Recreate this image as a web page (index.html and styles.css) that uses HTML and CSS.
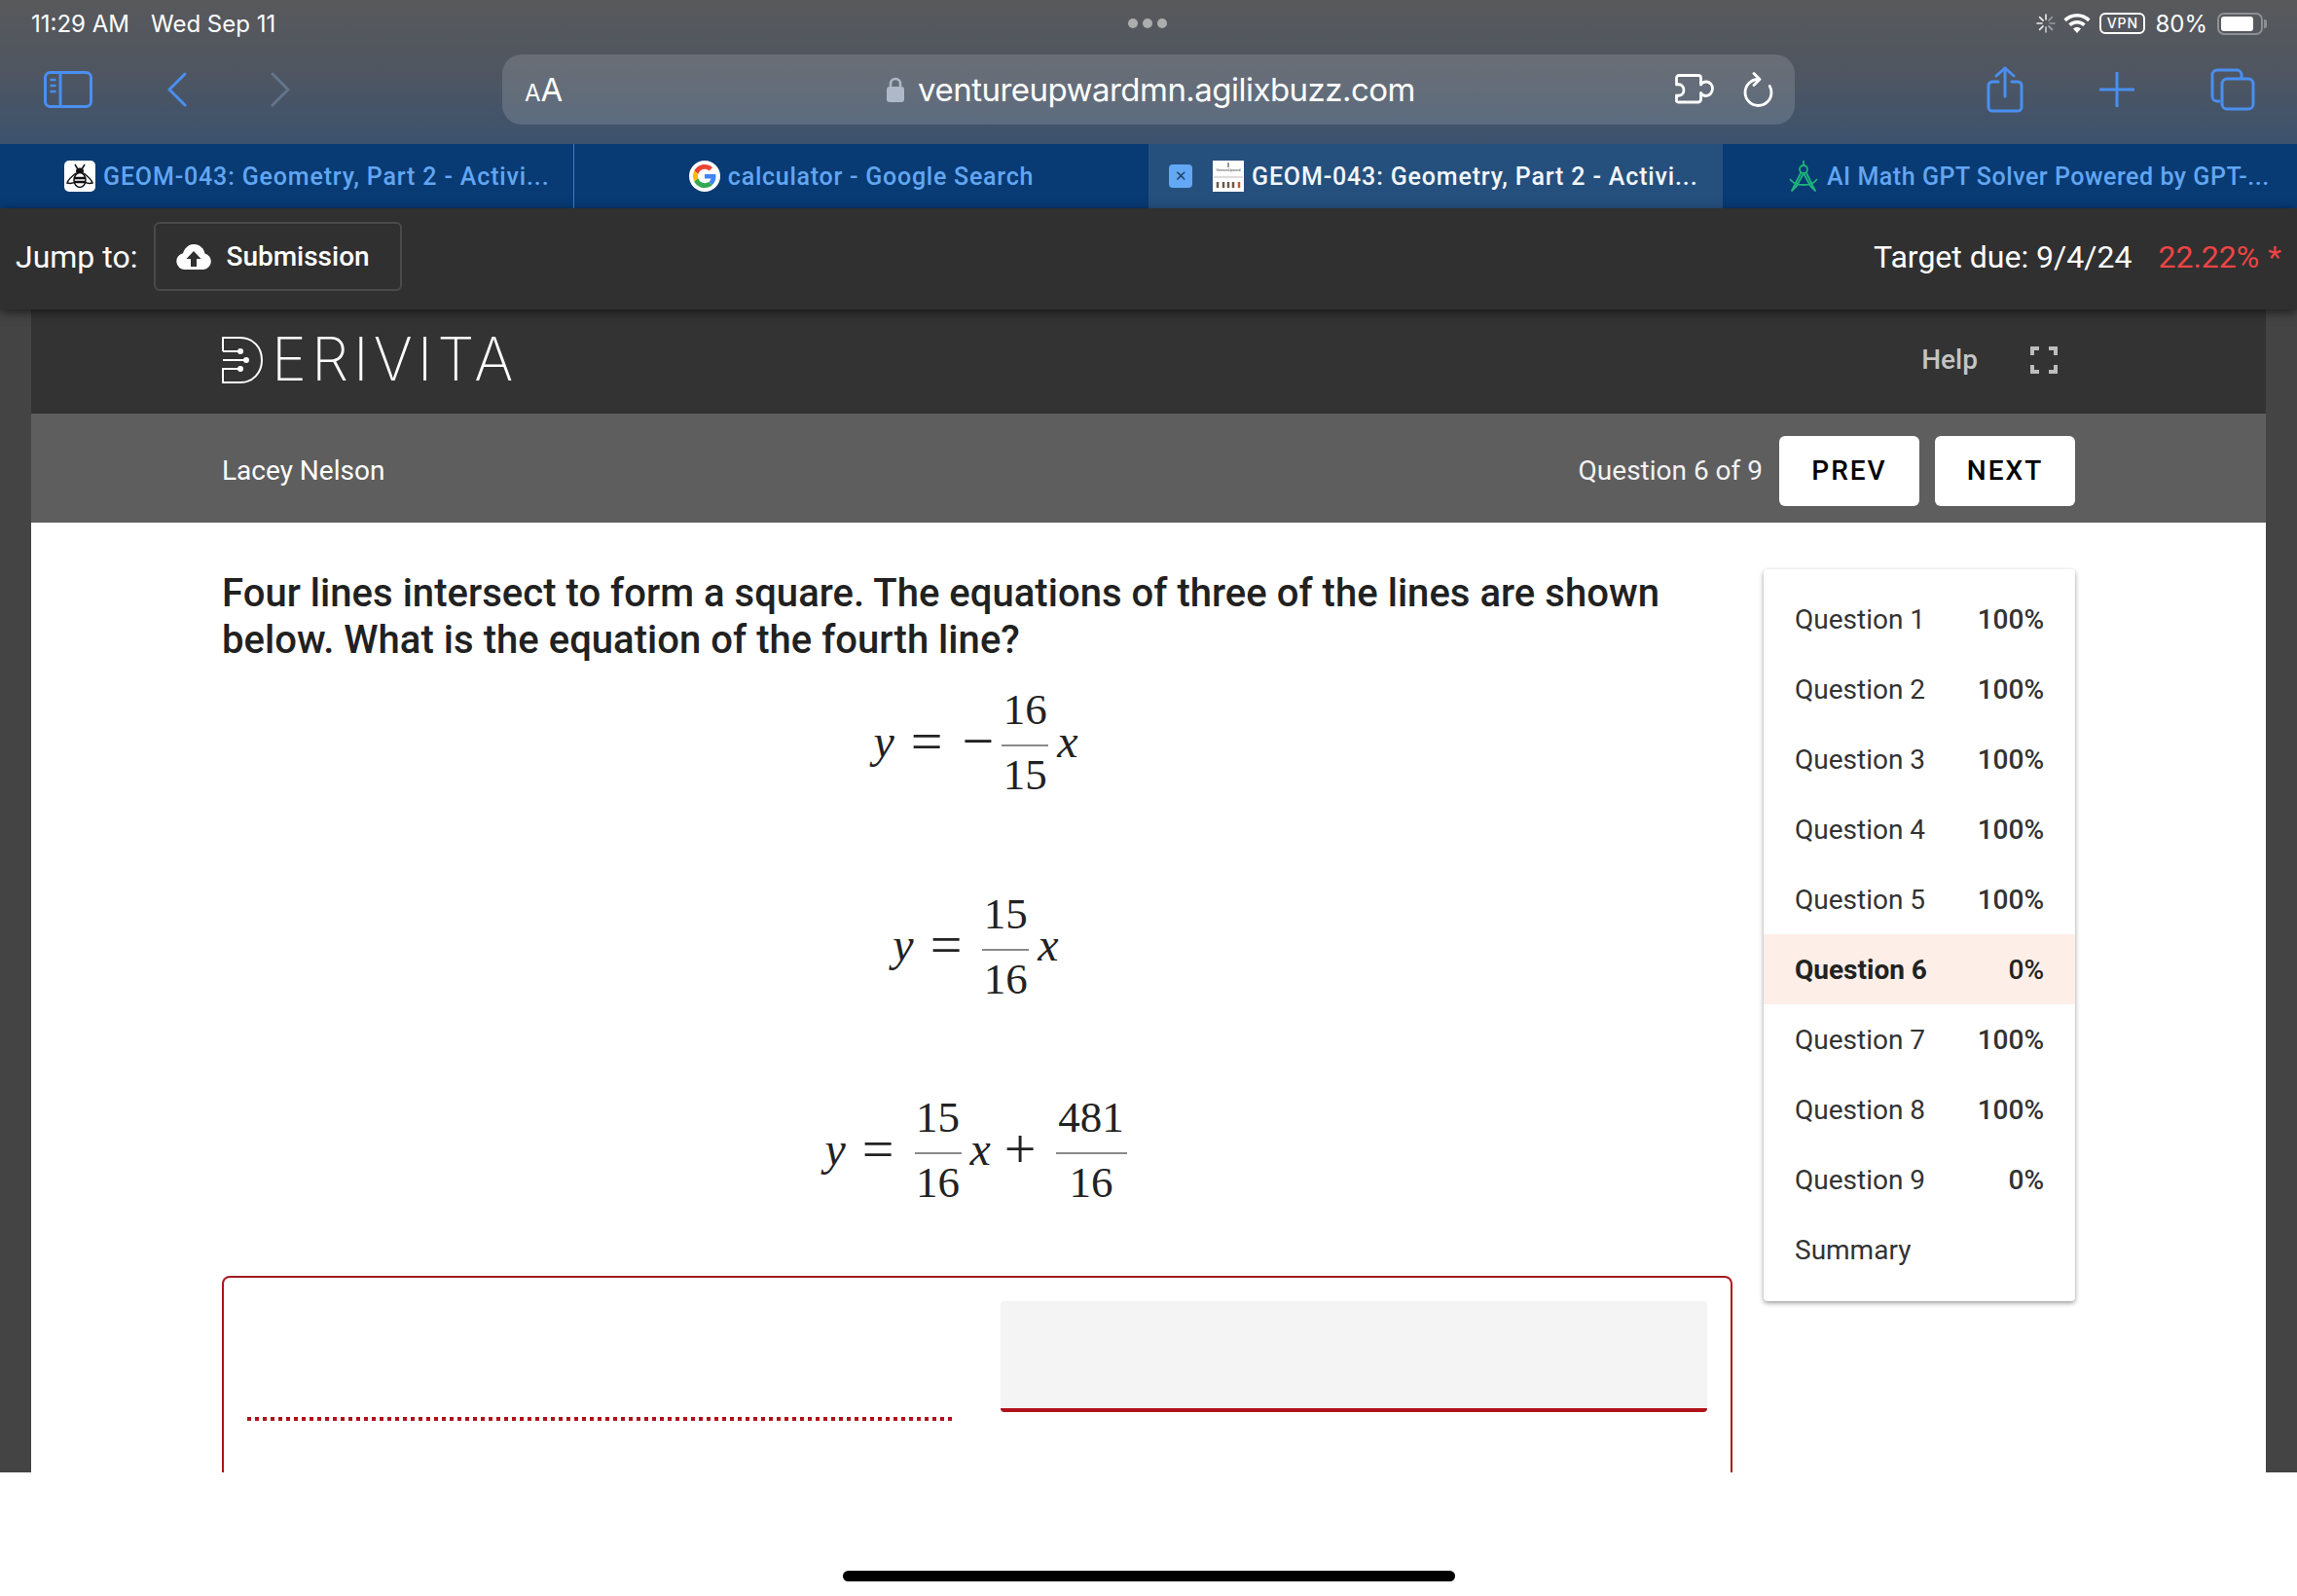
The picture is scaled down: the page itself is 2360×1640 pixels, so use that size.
FILE: index.html
```html
<!DOCTYPE html>
<html lang="en">
<head>
    <meta charset="UTF-8">
    <title>GEOM-043: Geometry, Part 2 - Activity</title>
    <link rel="stylesheet" href="styles.css">
</head>
<body>
    <div class="chrome">
        <div class="status-bar">
            <div class="status-time"><span>11:29 AM</span><span>Wed Sep 11</span></div>
            <div class="status-dots"><i></i><i></i><i></i></div>
            <div class="status-right">
                <svg class="ic-spin" viewBox="0 0 20 20" fill="none" stroke="#fff" stroke-width="1.6" stroke-linecap="round">
                    <path d="M10 1v5" opacity=".9"/><path d="M16.4 3.6l-3.5 3.5" opacity=".4"/><path d="M19 10h-5" opacity=".4"/><path d="M16.4 16.4l-3.5-3.5" opacity=".5"/><path d="M10 19v-5" opacity=".7"/><path d="M3.6 16.4l3.5-3.5" opacity=".9"/><path d="M1 10h5" opacity=".9"/><path d="M3.6 3.6l3.5 3.5" opacity=".9"/>
                </svg>
                <svg class="ic-wifi" viewBox="0 0 28 20" fill="#fff">
                    <path d="M14 0C8.6 0 3.8 2.1.4 5.6l2.5 2.6C5.8 5.4 9.7 3.6 14 3.6s8.200 1.800 11.100 4.600l2.500-2.600C24.200 2.100 19.400 0 14 0z"/>
                    <path d="M14 7C10.600 7 7.600 8.300 5.300 10.500l2.500 2.600C9.400 11.600 11.600 10.600 14 10.600s4.600 1 6.200 2.500l2.500-2.600C20.400 8.300 17.400 7 14 7z"/>
                    <path d="M14 14c-1.600 0-3 .6-4 1.600l4 4.400 4-4.400c-1-1-2.400-1.600-4-1.600z"/>
                </svg>
                <span class="vpn">VPN</span>
                <span class="batt-pct">80%</span>
                <span class="battery"><span class="battery-fill"></span></span>
            </div>
        </div>
        <div class="toolbar">
            <svg class="ic-sidebar" viewBox="0 0 50 38" fill="none" stroke="#4a8ff0" stroke-width="3">
                <rect x="1.500" y="1.500" width="47" height="35" rx="5"/><path d="M17 2v34"/>
                <path d="M6.500 9h6M6.500 15h6M6.500 21h6" stroke-width="2.500"/>
            </svg>
            <svg class="ic-back" viewBox="0 0 20 36" fill="none" stroke="#4a8ff0" stroke-width="3" stroke-linecap="round" stroke-linejoin="round"><path d="M18 2L2 18l16 16"/></svg>
            <svg class="ic-forward" viewBox="0 0 20 36" fill="none" stroke="#63758a" stroke-width="3" stroke-linecap="round" stroke-linejoin="round"><path d="M2 2l16 16L2 34"/></svg>
            <div class="address">
                <span class="aa"><small>A</small>A</span>
                <div class="url">
                    <svg class="ic-lock" viewBox="0 0 18 26"><path d="M4 11V7a5 5 0 0 1 10 0v4" fill="none" stroke="#aeb8c8" stroke-width="2.500"/><rect y="10" width="18" height="16" rx="3" fill="#aeb8c8"/></svg>
                    <span>ventureupwardmn.agilixbuzz.com</span>
                </div>
                <svg class="ic-puzzle" viewBox="0 0 40 32" fill="none" stroke="#fff" stroke-width="2.800" stroke-linejoin="round">
                    <path d="M4 1.500h20a2.500 2.500 0 0 1 2.500 2.500v7c1-2 3-3 5.500-3 3.500 0 6.500 3 6.500 7s-3 7.500-6.500 7.500c-2.500 0-4.500-1-5.500-3v7a3 3 0 0 1-2.500 2.500H4A2.500 2.500 0 0 1 1.500 28v-6c4.500 1 7.500-1.500 7.500-5.500S6 10 1.500 11V4A2.500 2.500 0 0 1 4 1.500z"/>
                </svg>
                <svg class="ic-reload" viewBox="0 0 31 36" fill="none" stroke="#fff" stroke-width="2.800" stroke-linecap="round" stroke-linejoin="round">
                    <path d="M15.500 7.500A13.500 13.500 0 1 0 29 21c0-2.600-.6-4.700-1.800-6.600"/><path d="M11 1.500l6 6-6 6"/>
                </svg>
            </div>
            <svg class="ic-share" viewBox="0 0 38 48" fill="none" stroke="#4a8ff0" stroke-width="3" stroke-linecap="round" stroke-linejoin="round">
                <path d="M12 16H6a4 4 0 0 0-4 4v22a4 4 0 0 0 4 4h26a4 4 0 0 0 4-4V20a4 4 0 0 0-4-4h-6"/><path d="M19 31V2"/><path d="M10 10l9-8 9 8"/>
            </svg>
            <svg class="ic-plus" viewBox="0 0 36 36" fill="none" stroke="#4a8ff0" stroke-width="3" stroke-linecap="round"><path d="M18 1v34M1 18h34"/></svg>
            <svg class="ic-tabs" viewBox="0 0 46 44" fill="none" stroke="#4a8ff0" stroke-width="3">
                <path d="M10 34H7a5 5 0 0 1-5-5V7a5 5 0 0 1 5-5h20a5 5 0 0 1 5 5v4"/>
                <rect x="12" y="11" width="32" height="31" rx="5"/>
            </svg>
        </div>
        <div class="tabs">
            <div class="tab tab-first">
                <svg class="favicon" viewBox="0 0 32 32">
                    <rect width="32" height="32" rx="5" fill="#fff"/>
                    <path d="M11 4l3 5M21 4l-3 5" stroke="#111" stroke-width="1.500"/>
                    <ellipse cx="16" cy="11" rx="4" ry="3.500" fill="#111"/>
                    <path d="M12 13C8 16 4 20 3 23c4 1 7 0 9-2M20 13c4 3 8 7 9 10-4 1-7 0-9-2" fill="#fff" stroke="#111" stroke-width="1.500"/>
                    <ellipse cx="16" cy="20" rx="6" ry="7.500" fill="#fff" stroke="#111" stroke-width="1.500"/>
                    <path d="M10.500 18h11M10.500 22h11" stroke="#111" stroke-width="2.500"/>
                </svg>
                <span class="tab-title">GEOM-043: Geometry, Part 2 - Activi...</span>
            </div>
            <div class="tab tab-second">
                <svg class="favicon" viewBox="-8 -8 64 64">
                    <circle cx="24" cy="24" r="32" fill="#fff"/>
                    <path fill="#ea4335" d="M24 9.500c3.540 0 6.710 1.220 9.210 3.600l6.850-6.850C35.900 2.380 30.470 0 24 0 14.620 0 6.510 5.380 2.560 13.220l7.980 6.190C12.430 13.720 17.740 9.500 24 9.500z"/>
                    <path fill="#4285f4" d="M46.980 24.550c0-1.570-.15-3.090-.38-4.550H24v9.020h12.940c-.58 2.960-2.260 5.480-4.780 7.180l7.730 6c4.510-4.180 7.090-10.360 7.090-17.650z"/>
                    <path fill="#fbbc05" d="M10.530 28.590c-.48-1.450-.76-2.990-.76-4.590s.27-3.140.76-4.590l-7.980-6.190C.92 16.460 0 20.120 0 24c0 3.880.92 7.540 2.560 10.780l7.970-6.190z"/>
                    <path fill="#34a853" d="M24 48c6.480 0 11.930-2.130 15.890-5.810l-7.730-6c-2.150 1.450-4.920 2.300-8.160 2.300-6.260 0-11.570-4.220-13.470-9.910l-7.980 6.190C6.510 42.620 14.620 48 24 48z"/>
                </svg>
                <span class="tab-title">calculator - Google Search</span>
            </div>
            <div class="tab tab-active">
                <span class="tab-close">&#x2715;</span>
                <svg class="favicon" viewBox="0 0 32 32">
                    <rect width="32" height="32" fill="#fff"/>
                    <text x="16" y="11" class="favicon-word">VentureUpward</text>
                    <path d="M16 2v5" stroke="#333"/>
                    <path d="M1 17h30" stroke="#bbb"/>
                    <path d="M5 22v6M11 22v6M16 22v6M21 22v6" stroke="#6a5a4a" stroke-width="2.500"/>
                    <path d="M27 22v6" stroke="#c8552f" stroke-width="2.500"/>
                </svg>
                <span class="tab-title">GEOM-043: Geometry, Part 2 - Activi...</span>
            </div>
            <div class="tab tab-last">
                <svg class="favicon" viewBox="0 0 32 32" fill="none" stroke="#1db57c" stroke-width="1.800" stroke-linejoin="round">
                    <circle cx="16" cy="9" r="4"/><path d="M16 0v5M13.500 12L4 31l5-5 7-13M18.500 12L28 31l-5-5-7-13M2 19c3 4 6 6 14 6s11-2 14-6"/>
                </svg>
                <span class="tab-title">AI Math GPT Solver Powered by GPT-...</span>
            </div>
        </div>
    </div>

    <div class="jump-bar">
        <span class="jump-label">Jump to:</span>
        <button class="jump-btn">
            <svg class="ic-upload" viewBox="0 0 36 26">
                <path d="M9 26a8.500 8.500 0 0 1-2-16.800C8.500 4 13 0 18 0c6 0 10.500 4 11.500 9.500A8.400 8.400 0 0 1 28 26z" fill="#fff"/>
                <path d="M18 7l7.500 8H21v8h-6v-8h-4.500z" fill="#303030"/>
            </svg>
            Submission
        </button>
        <div class="jump-right">
            <span>Target due: 9/4/24</span>
            <span class="score">22.22%</span>
            <span class="star">*</span>
        </div>
    </div>

    <div class="page">
        <div class="brand-bar">
            <div class="logo">
                <svg class="logo-d" viewBox="0 0 43 48" fill="none" stroke="#fff" stroke-width="2">
                    <path d="M1 15V1h18c13 0 22 10 22 23s-9 23-22 23H1V32"/>
                    <path d="M1 15h17M1 24h23M1 33h17"/>
                    <circle cx="19" cy="15" r="3" fill="#fff" stroke="none"/><circle cx="25" cy="24" r="3" fill="#fff" stroke="none"/><circle cx="19" cy="33" r="3" fill="#fff" stroke="none"/>
                </svg>
                <span class="logo-text">ERIVITA</span>
            </div>
            <div class="brand-right">
                <span class="help">Help</span>
                <svg class="ic-full" viewBox="0 0 28 28" fill="none" stroke="#bdbdbd" stroke-width="4">
                    <path d="M9 2H2v7M19 2h7v7M9 26H2v-7M19 26h7v-7"/>
                </svg>
            </div>
        </div>
        <div class="user-bar">
            <span>Lacey Nelson</span>
            <div class="user-right">
                <span class="q-count">Question 6 of 9</span>
                <button class="nav-btn">PREV</button>
                <button class="nav-btn">NEXT</button>
            </div>
        </div>
        <div class="content">
            <div class="question">
                <p class="prompt">Four lines intersect to form a square. The equations of three of the lines are shown below. What is the equation of the fourth line?</p>
                <div class="eq">
                    <i class="var">y</i><span class="op eq-sign">=</span><span class="op minus">&minus;</span>
                    <span class="frac"><span class="num">16</span><span class="den">15</span></span>
                    <i class="var after-frac">x</i>
                </div>
                <div class="eq">
                    <i class="var">y</i><span class="op eq-sign">=</span>
                    <span class="frac"><span class="num">15</span><span class="den">16</span></span>
                    <i class="var after-frac">x</i>
                </div>
                <div class="eq">
                    <i class="var">y</i><span class="op eq-sign">=</span>
                    <span class="frac"><span class="num">15</span><span class="den">16</span></span>
                    <i class="var after-frac">x</i><span class="op plus">+</span>
                    <span class="frac frac-wide"><span class="num">481</span><span class="den">16</span></span>
                </div>
                <div class="answer-box">
                    <div class="dotted"></div>
                    <div class="answer-input"></div>
                </div>
            </div>
            <aside class="side-list">
                <div class="side-row"><span>Question 1</span><span class="pct">100%</span></div>
                <div class="side-row"><span>Question 2</span><span class="pct">100%</span></div>
                <div class="side-row"><span>Question 3</span><span class="pct">100%</span></div>
                <div class="side-row"><span>Question 4</span><span class="pct">100%</span></div>
                <div class="side-row"><span>Question 5</span><span class="pct">100%</span></div>
                <div class="side-row current"><span>Question 6</span><span class="pct">0%</span></div>
                <div class="side-row"><span>Question 7</span><span class="pct">100%</span></div>
                <div class="side-row"><span>Question 8</span><span class="pct">100%</span></div>
                <div class="side-row"><span>Question 9</span><span class="pct">0%</span></div>
                <div class="side-row"><span>Summary</span></div>
            </aside>
        </div>
    </div>

    <div class="home-area"><div class="home-bar"></div></div>
</body>
</html>
```

FILE: styles.css
```css
:root {
    --blue: #4a8ff0;
    --tab-text: #62a6f2;
    --red: #b0121a;
}

* {
    box-sizing: border-box;
}

body {
    margin: 0;
    width: 2360px;
    height: 1640px;
    overflow: hidden;
    background: #fff;
    font-family: Roboto, sans-serif;
    display: flex;
    flex-direction: column;
}

svg {
    display: block;
    flex: none;
}

/* browser chrome */
.chrome {
    height: 214px;
    background: linear-gradient(180deg, #58595b 0%, #4f5661 35%, #2a4f7a 100%);
}

.status-bar {
    height: 48px;
    padding: 0 35px 0 32px;
    display: grid;
    grid-template-columns: 1fr auto 1fr;
    align-items: center;
    color: #fff;
    font-family: Inter, sans-serif;
    font-size: 24px;
}

.status-time {
    display: flex;
    gap: 22px;
}

.status-dots {
    display: flex;
    gap: 5px;
}

.status-dots i {
    width: 10px;
    height: 10px;
    border-radius: 50%;
    background: #adadad;
}

.status-right {
    display: flex;
    align-items: center;
    justify-content: flex-end;
}

.ic-spin {
    width: 20px;
    height: 20px;
}

.ic-wifi {
    width: 28px;
    height: 20px;
    margin-left: 8px;
}

.vpn {
    margin-left: 9px;
    width: 47px;
    height: 22px;
    border: 2px solid #fff;
    border-radius: 6px;
    font-size: 14px;
    font-weight: 500;
    letter-spacing: 1px;
    line-height: 18px;
    text-align: center;
}

.batt-pct {
    margin-left: 10px;
}

.battery {
    margin-left: 10px;
    width: 47px;
    height: 23px;
    border: 2px solid #8c8f93;
    border-radius: 7px;
    padding: 2px;
    position: relative;
}

.battery::after {
    content: '';
    position: absolute;
    right: -6px;
    top: 5px;
    width: 3px;
    height: 9px;
    border-radius: 0 2px 2px 0;
    background: #8c8f93;
}

.battery-fill {
    display: block;
    width: 33px;
    height: 15px;
    border-radius: 3px;
    background: #fff;
}

.toolbar {
    height: 100px;
    padding: 8px 0 20px 45px;
    display: flex;
    align-items: center;
}

.ic-sidebar {
    width: 50px;
    height: 38px;
}

.ic-back {
    width: 20px;
    height: 36px;
    margin-left: 77px;
}

.ic-forward {
    width: 20px;
    height: 36px;
    margin-left: 86px;
}

.address {
    width: 1328px;
    height: 72px;
    margin-left: 218px;
    padding: 0 22px 0 23px;
    border-radius: 20px;
    background: rgba(255, 255, 255, 0.14);
    display: flex;
    align-items: center;
    color: #fff;
    font-family: Inter, sans-serif;
}

.aa {
    width: 39px;
    font-size: 33px;
    line-height: 1;
    white-space: nowrap;
}

.aa small {
    font-size: 24px;
}

.url {
    flex: 1;
    margin-left: 66px;
    display: flex;
    align-items: center;
    justify-content: center;
    gap: 14px;
    font-size: 33px;
    letter-spacing: -0.53px;
}

.ic-lock {
    width: 18px;
    height: 26px;
}

.ic-puzzle {
    width: 40px;
    height: 32px;
}

.ic-reload {
    width: 31px;
    height: 36px;
    margin-left: 30px;
}

.ic-share {
    width: 38px;
    height: 48px;
    margin-left: 197px;
}

.ic-plus {
    width: 36px;
    height: 36px;
    margin-left: 78px;
}

.ic-tabs {
    width: 46px;
    height: 44px;
    margin-left: 78px;
}

.tabs {
    height: 66px;
    display: flex;
    font-size: 25px;
    font-weight: 500;
    letter-spacing: 0.85px;
    color: var(--tab-text);
}

.tab {
    width: 590px;
    height: 100%;
    display: flex;
    align-items: center;
    background: #083a73;
    white-space: nowrap;
}

.favicon {
    width: 32px;
    height: 32px;
    margin-right: 8px;
}

.favicon-word {
    font-family: "Liberation Sans", sans-serif;
    font-size: 3.6px;
    font-weight: 400;
    letter-spacing: 0;
    text-anchor: middle;
    fill: #333;
}

.tab-first {
    padding-left: 66px;
    border-right: 1px solid #3f7fc9;
}

.tab-second {
    justify-content: center;
    letter-spacing: 0.75px;
}

.tab-active {
    padding-left: 21px;
    background: #25507d;
    color: #f2f6fb;
}

.tab-close {
    width: 24px;
    height: 24px;
    margin-right: 21px;
    border-radius: 4px;
    background: #62a8f5;
    color: #1d4168;
    font-size: 15px;
    letter-spacing: 0;
    line-height: 24px;
    text-align: center;
}

.tab-last {
    padding-left: 67px;
    letter-spacing: 0.53px;
}

/* jump bar */
.jump-bar {
    height: 104px;
    padding: 0 16px 5px;
    display: flex;
    align-items: center;
    background: #303030;
    color: #fff;
    font-size: 32px;
    position: relative;
    z-index: 2;
    box-shadow: 0 3px 10px rgba(0, 0, 0, 0.55);
}

.jump-btn {
    width: 255px;
    height: 71px;
    margin-left: 17px;
    padding: 0 0 0 21px;
    display: flex;
    align-items: center;
    gap: 15px;
    background: transparent;
    border: 2px solid #4a4a4a;
    border-radius: 6px;
    color: #fff;
    font-family: Roboto, sans-serif;
    font-size: 28px;
    font-weight: 500;
}

.ic-upload {
    width: 36px;
    height: 26px;
}

.jump-right {
    margin-left: auto;
    display: flex;
    align-items: center;
}

.score {
    margin-left: 27px;
    color: #ef4444;
}

.star {
    margin-left: 9px;
    color: #ef4444;
}

/* page */
.page {
    height: 1195px;
    padding: 0 32px;
    background: #444;
    overflow: hidden;
}

.brand-bar {
    height: 107px;
    padding: 0 214px 4px 196px;
    display: flex;
    align-items: center;
    justify-content: space-between;
    background: #333;
}

.logo {
    display: flex;
    align-items: center;
    color: #fff;
}

.logo-d {
    width: 43px;
    height: 48px;
}

.logo-text {
    margin-left: 8px;
    font-family: Inter, sans-serif;
    font-size: 61px;
    font-weight: 200;
    letter-spacing: 5px;
    line-height: 1;
}

.brand-right {
    display: flex;
    align-items: center;
    gap: 54px;
}

.help {
    color: #c4c4c4;
    font-size: 28px;
    font-weight: 500;
}

.ic-full {
    width: 28px;
    height: 28px;
}

.user-bar {
    height: 112px;
    padding: 5px 196px 0;
    display: flex;
    align-items: center;
    justify-content: space-between;
    background: #5e5e5e;
    color: #fff;
    font-size: 28px;
}

.user-right {
    display: flex;
    align-items: center;
}

.q-count {
    margin-right: 17px;
    color: #f2f2f2;
}

.nav-btn {
    width: 144px;
    height: 72px;
    margin-left: 16px;
    border: 0;
    border-radius: 6px;
    background: #fff;
    color: #000;
    font-family: Roboto, sans-serif;
    font-size: 28px;
    font-weight: 500;
    letter-spacing: 2px;
}

.q-count + .nav-btn {
    margin-left: 0;
}

.content {
    height: 976px;
    padding: 48px 196px 0;
    display: flex;
    gap: 32px;
    background: #fff;
    overflow: hidden;
}

.question {
    width: 1552px;
    flex: none;
}

.prompt {
    margin: 1px 0 22px;
    font-size: 40px;
    font-weight: 500;
    letter-spacing: 0.035px;
    line-height: 48px;
    color: #212121;
}

/* equations */
.eq {
    height: 117px;
    padding-right: 3px;
    display: flex;
    align-items: center;
    justify-content: center;
    font-family: "Liberation Serif", serif;
    font-size: 45px;
    color: #222;
}

.eq + .eq {
    margin-top: 92.5px;
}

.var {
    font-size: 48px;
    line-height: 1;
    position: relative;
    top: -1px;
}

.after-frac {
    margin-left: 9px;
}

.op {
    font-size: 58px;
    font-weight: 400;
    line-height: 1;
    position: relative;
    top: -1px;
}

.eq-sign {
    margin-left: 17px;
    margin-right: 21px;
}

.minus {
    margin-right: 8px;
    margin-left: -1px;
}

.plus {
    margin: 0 20px 0 14px;
}

.frac {
    width: 48px;
    display: flex;
    flex-direction: column;
    align-items: center;
    line-height: 50px;
}

.frac-wide {
    width: 73px;
}

.num {
    width: 100%;
    padding-bottom: 11px;
    text-align: center;
    border-bottom: 2px solid #8a8a8a;
}

.den {
    width: 100%;
    padding-top: 4px;
    text-align: center;
}

.answer-box {
    height: 300px;
    margin-top: 71px;
    padding: 24px 24px 0;
    display: grid;
    grid-template-columns: 728px 726px;
    column-gap: 46px;
    border: 2px solid var(--red);
    border-top-color: #a01c20;
    border-radius: 8px;
}

.dotted {
    height: 4px;
    margin-top: 119px;
    background: repeating-linear-gradient(90deg, var(--red) 0 4px, transparent 4px 8px);
}

.answer-input {
    height: 114px;
    background: #f4f4f4;
    border-bottom: 4px solid var(--red);
    border-radius: 4px;
}

/* side list */
.side-list {
    width: 320px;
    height: 752px;
    flex: none;
    padding: 15px 0 13px;
    border-radius: 4px;
    background: #fff;
    box-shadow: 0 2px 5px rgba(0, 0, 0, 0.4);
    color: #333;
    font-size: 28px;
}

.side-row {
    height: 72px;
    padding: 0 32px;
    display: flex;
    align-items: center;
    justify-content: space-between;
}

.pct {
    font-weight: 500;
}

.side-row.current {
    background: #fdeee8;
    color: #222;
    font-weight: 700;
}

.side-row.current .pct {
    font-weight: 500;
}

/* home indicator */
.home-area {
    flex: 1;
    padding-top: 101px;
    background: #fff;
}

.home-bar {
    width: 629px;
    height: 11px;
    margin: 0 auto;
    border-radius: 6px;
    background: #000;
}
```
